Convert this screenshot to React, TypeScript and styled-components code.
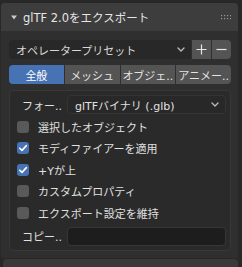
import React from 'react';
import styled, { createGlobalStyle } from 'styled-components';

const FONT = `"DejaVu Sans", "Noto Sans CJK JP", sans-serif`;

const GlobalStyle = createGlobalStyle`
  html, body {
    margin: 0;
    padding: 0;
    background: #282828;
  }
  body {
    font-family: ${FONT};
    font-size: 11px;
    color: #e2e2e2;
  }
`;

// --- Frame / panel shell ---

const Frame = styled.div`
  width: 242px;
  height: 267px;
  box-sizing: border-box;
  padding: 3px 4px 0 1px;
  display: flex;
  flex-direction: column;
  overflow: hidden;
  background: #282828;
`;

const Panel = styled.section`
  background: #2f2f2f;
  border-radius: 4px 4px 0 0;
  display: flex;
  flex-direction: column;
`;

const Header = styled.div`
  height: 28px;
  display: flex;
  align-items: center;
  padding: 0 7px 0 10px;
  background: #3d3d3d;
  border-radius: 4px 4px 0 0;
`;

const Title = styled.span`
  margin-left: 6px;
  font-size: 11.5px;
  color: #e6e6e6;
  flex: 1;
  white-space: nowrap;
`;

const Body = styled.div`
  display: flex;
  flex-direction: column;
  gap: 6px;
  padding: 9px 7px 7px 8px;
`;

const NextHeader = styled.div`
  flex: 1;
  margin: 1px 0 0 2px;
  background: #393939;
  border-radius: 4px 4px 0 0;
`;

// --- Preset row ---

const Row = styled.div`
  display: flex;
  height: 19px;
`;

const PresetMenu = styled.div`
  flex: 1;
  display: flex;
  align-items: center;
  padding: 0 6px 0 7px;
  background: #282828;
  border-radius: 4px 0 0 4px;
  color: #d8d8d8;
`;

const MenuText = styled.span`
  flex: 1;
  white-space: nowrap;
  overflow: hidden;
`;

const ToolButton = styled.div<{ $last?: boolean }>`
  width: 19px;
  display: flex;
  align-items: center;
  justify-content: center;
  background: #545454;
  margin-left: 1px;
  border-radius: ${({ $last }) => ($last ? '0 4px 4px 0' : '0')};
`;

// --- Tabs ---

const Tabs = styled.div`
  display: flex;
  gap: 1px;
  height: 19px;
`;

const Tab = styled.div<{ $active?: boolean }>`
  flex: 1;
  display: flex;
  align-items: center;
  justify-content: center;
  background: ${({ $active }) => ($active ? '#4772b3' : '#545454')};
  color: ${({ $active }) => ($active ? '#ffffff' : '#e4e4e4')};
  white-space: nowrap;
  overflow: hidden;
  &:first-child {
    border-radius: 4px 0 0 4px;
  }
  &:last-child {
    border-radius: 0 4px 4px 0;
  }
`;

// --- Sub panel ---

const SubPanel = styled.div`
  display: flex;
  flex-direction: column;
  padding: 4px 4px 4px 6px;
  background: #2a2a2a;
  border: 1px solid #383838;
  border-radius: 4px;
`;

const PropRow = styled.div`
  display: flex;
  align-items: center;
  height: 19px;
`;

const PropLabel = styled.span`
  width: 46px;
  margin-right: 5px;
  text-align: right;
  white-space: nowrap;
  color: #e0e0e0;
`;

const Dropdown = styled.div`
  flex: 1;
  align-self: stretch;
  display: flex;
  align-items: center;
  padding: 0 6px 0 7px;
  background: #282828;
  border: 1px solid #343434;
  border-radius: 4px;
  color: #e0e0e0;
`;

const TextField = styled.div`
  flex: 1;
  align-self: stretch;
  background: #1d1d1d;
  border: 1px solid #363636;
  border-radius: 4px;
`;

const CheckList = styled.div`
  display: flex;
  flex-direction: column;
  margin: 2px 0 3px;
`;

const CheckRow = styled.div`
  height: 21.5px;
  display: flex;
  align-items: center;
  padding-left: 1px;
  gap: 9px;
  color: #e0e0e0;
`;

const Box = styled.div<{ $checked?: boolean }>`
  width: 12px;
  height: 12px;
  border-radius: 3px;
  background: ${({ $checked }) => ($checked ? '#4772b3' : '#595959')};
  display: flex;
  align-items: center;
  justify-content: center;
`;

// --- Icons ---

const Chevron = () => (
  <svg width="8" height="5" viewBox="0 0 8 5">
    <path d="M1 1 L4 4 L7 1" fill="none" stroke="#b8b8b8" strokeWidth="1.4" strokeLinecap="round" strokeLinejoin="round" />
  </svg>
);

const Disclosure = () => (
  <svg width="6" height="5" viewBox="0 0 6 5">
    <path d="M0 0.5 H6 L3 4.5 Z" fill="#c8c8c8" />
  </svg>
);

const Grip = () => (
  <svg width="10" height="5" viewBox="0 0 10 5">
    {[0, 3, 6, 9].map((x) =>
      [0, 3].map((y) => <rect key={`${x}-${y}`} x={x} y={y} width="1.2" height="1.2" fill="#9a9a9a" />)
    )}
  </svg>
);

const Plus = () => (
  <svg width="11" height="11" viewBox="0 0 11 11">
    <path d="M5.5 0.5 V10.5 M0.5 5.5 H10.5" stroke="#e6e6e6" strokeWidth="1.2" />
  </svg>
);

const Minus = () => (
  <svg width="11" height="11" viewBox="0 0 11 11">
    <path d="M0.5 5.5 H10.5" stroke="#e6e6e6" strokeWidth="1.2" />
  </svg>
);

const Check = () => (
  <svg width="10" height="10" viewBox="0 0 10 10">
    <path d="M1.8 5.2 L4 7.4 L8.4 2.6" fill="none" stroke="#ffffff" strokeWidth="1.6" strokeLinecap="round" strokeLinejoin="round" />
  </svg>
);

const options = [
  { label: '選択したオブジェクト', checked: false },
  { label: 'モディファイアーを適用', checked: true },
  { label: '+Yが上', checked: true },
  { label: 'カスタムプロパティ', checked: false },
  { label: 'エクスポート設定を維持', checked: false },
];

const tabs = ['全般', 'メッシュ', 'オブジェ..', 'アニメー..'];

const App: React.FC = () => (
  <>
    <GlobalStyle />
    <Frame>
      <Panel>
        <Header>
          <Disclosure />
          <Title>glTF 2.0をエクスポート</Title>
          <Grip />
        </Header>
        <Body>
          <Row>
            <PresetMenu>
              <MenuText>オペレータープリセット</MenuText>
              <Chevron />
            </PresetMenu>
            <ToolButton>
              <Plus />
            </ToolButton>
            <ToolButton $last>
              <Minus />
            </ToolButton>
          </Row>
          <Tabs>
            {tabs.map((t, i) => (
              <Tab key={t} $active={i === 0}>
                {t}
              </Tab>
            ))}
          </Tabs>
          <SubPanel>
            <PropRow>
              <PropLabel>フォー..</PropLabel>
              <Dropdown>
                <MenuText>glTFバイナリ (.glb)</MenuText>
                <Chevron />
              </Dropdown>
            </PropRow>
            <CheckList>
              {options.map((o) => (
                <CheckRow key={o.label}>
                  <Box $checked={o.checked}>{o.checked && <Check />}</Box>
                  <span>{o.label}</span>
                </CheckRow>
              ))}
            </CheckList>
            <PropRow>
              <PropLabel>コピー..</PropLabel>
              <TextField />
            </PropRow>
          </SubPanel>
        </Body>
      </Panel>
      <NextHeader />
    </Frame>
  </>
);

export default App;
